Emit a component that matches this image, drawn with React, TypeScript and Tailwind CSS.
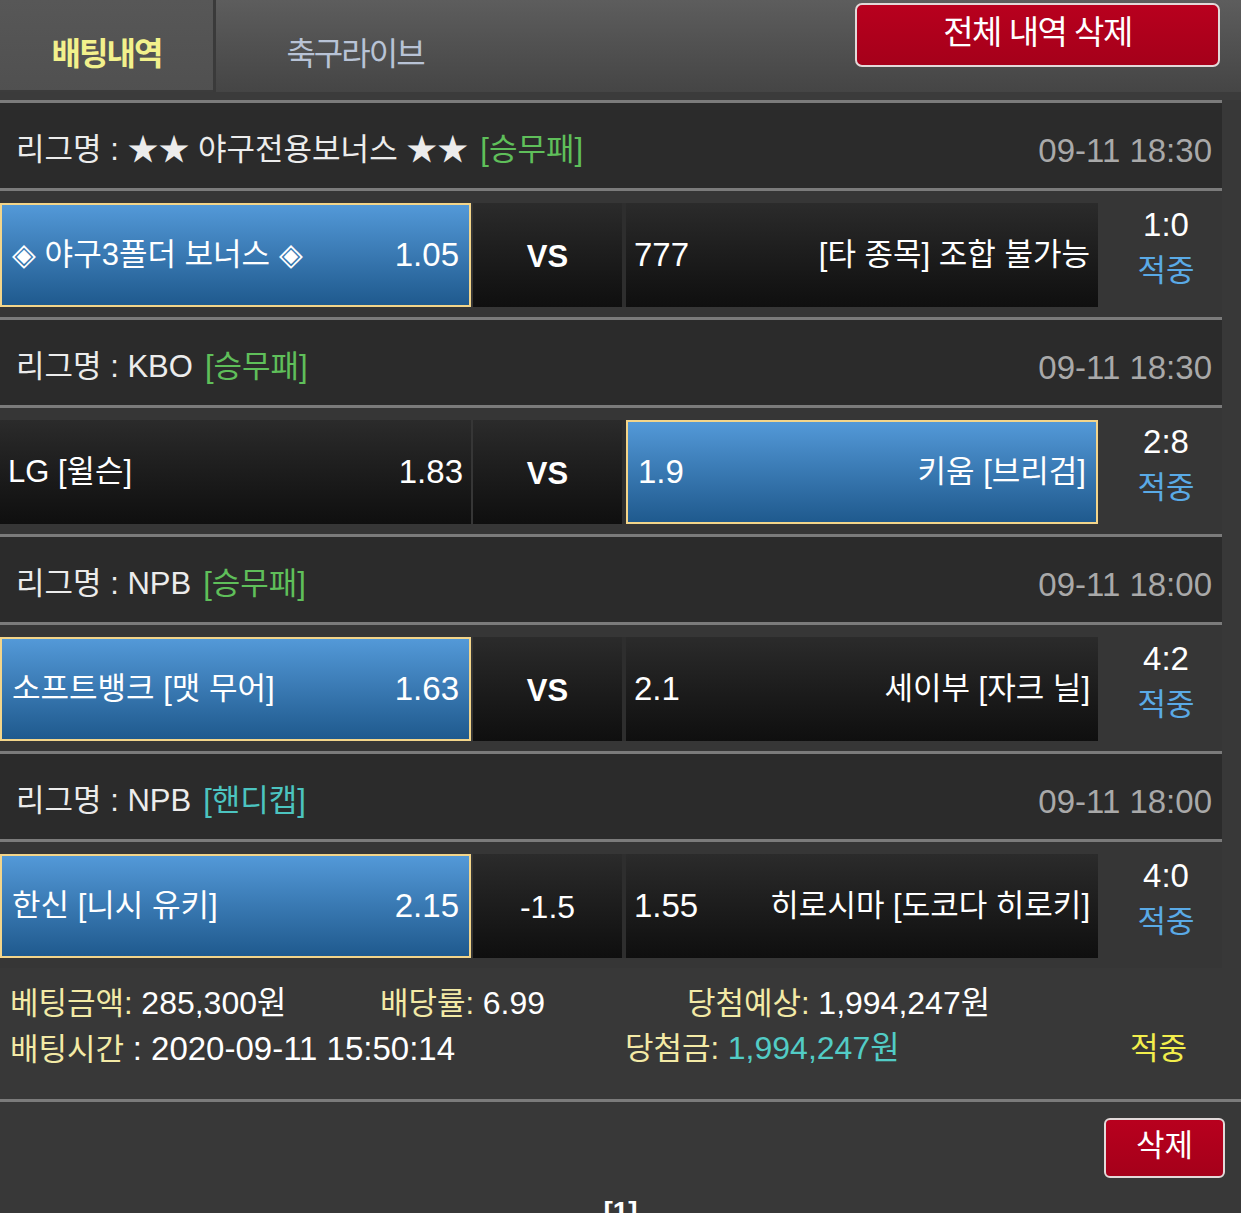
import React from "react";

type Match = {
  league: string;
  type: string;
  typeColor: string;
  time: string;
  home: string;
  homeOdds: string;
  mid: string;
  midBold: boolean;
  awayOdds: string;
  away: string;
  pick: "home" | "away";
  score: string;
};

const matches: Match[] = [
  {
    league: "★★ 야구전용보너스 ★★",
    type: "[승무패]",
    typeColor: "text-[#5fbf5a]",
    time: "09-11 18:30",
    home: "◈ 야구3폴더 보너스 ◈",
    homeOdds: "1.05",
    mid: "VS",
    midBold: true,
    awayOdds: "777",
    away: "[타 종목] 조합 불가능",
    pick: "home",
    score: "1:0",
  },
  {
    league: "KBO",
    type: "[승무패]",
    typeColor: "text-[#5fbf5a]",
    time: "09-11 18:30",
    home: "LG [윌슨]",
    homeOdds: "1.83",
    mid: "VS",
    midBold: true,
    awayOdds: "1.9",
    away: "키움 [브리검]",
    pick: "away",
    score: "2:8",
  },
  {
    league: "NPB",
    type: "[승무패]",
    typeColor: "text-[#5fbf5a]",
    time: "09-11 18:00",
    home: "소프트뱅크 [맷 무어]",
    homeOdds: "1.63",
    mid: "VS",
    midBold: true,
    awayOdds: "2.1",
    away: "세이부 [자크 닐]",
    pick: "home",
    score: "4:2",
  },
  {
    league: "NPB",
    type: "[핸디캡]",
    typeColor: "text-[#4cc4c0]",
    time: "09-11 18:00",
    home: "한신 [니시 유키]",
    homeOdds: "2.15",
    mid: "-1.5",
    midBold: false,
    awayOdds: "1.55",
    away: "히로시마 [도코다 히로키]",
    pick: "home",
    score: "4:0",
  },
];

const cellBase = "h-[104px] flex items-center justify-between text-white";
const picked =
  "bg-gradient-to-b from-[#5399d8] to-[#1f5a8e] border-2 border-[#f3d58a] px-[10px]";
const normal = "bg-gradient-to-b from-[#2b2b2b] to-[#0f0f0f] px-[8px]";

const Line = () => <div className="h-[3px] w-[1222px] bg-[#7b7b7b]" />;

const MatchBlock = ({ m, last }: { m: Match; last: boolean }) => (
  <>
    <div className="h-[85px] w-[1222px] bg-[#2b2b2b] flex items-center justify-between pl-[16px] pr-[10px] pt-[10px]">
      <div className="text-[#ececec] text-[31px]">
        리그명 : {m.league}
        <span className={`ml-[12px] ${m.typeColor}`}>{m.type}</span>
      </div>
      <div className="text-[#a9a9a9] text-[33px]">{m.time}</div>
    </div>
    <Line />
    <div className="h-[126px] w-[1222px] bg-[#363636] flex pt-[12px]">
      <div className={`w-[471px] ${cellBase} ${m.pick === "home" ? picked : normal}`}>
        <span className="text-[31px]">{m.home}</span>
        <span className="text-[33px]">{m.homeOdds}</span>
      </div>
      <div
        className={`ml-[2px] w-[149px] h-[104px] flex items-center justify-center text-white bg-gradient-to-b from-[#2b2b2b] to-[#0f0f0f] ${
          m.midBold ? "font-bold text-[31px] pt-[4px]" : "text-[32px] pt-[2px]"
        }`}
      >
        {m.mid}
      </div>
      <div className="w-[4px] h-[104px] bg-[#2e2e2e]" />
      <div className={`w-[472px] ${cellBase} ${m.pick === "away" ? picked : normal}`}>
        <span className="text-[33px]">{m.awayOdds}</span>
        <span className="text-[31px]">{m.away}</span>
      </div>
      <div className="w-[124px] h-[104px] flex flex-col items-center justify-center leading-[46px] pl-[12px] pb-[14px]">
        <span className="text-white text-[33px]">{m.score}</span>
        <span className="text-[#5aaae6] text-[31px]">적중</span>
      </div>
    </div>
    {!last && <Line />}
  </>
);

export default function App() {
  return (
    <div className="w-[1241px] min-h-[1213px] bg-[#383838] font-['Liberation_Sans','Noto_Sans_CJK_KR',sans-serif] overflow-hidden">
      <div className="h-[92px] bg-gradient-to-b from-[#5d5d5d] to-[#454545] flex items-stretch">
        <div className="w-[216px] bg-gradient-to-b from-[#575757] to-[#505050] border-r-[3px] border-[#3a3a3a] flex items-center justify-center pt-[16px] shadow-[inset_0_-2px_0_#3c3c3c]">
          <span className="text-[#f2f18c] text-[32px] font-bold tracking-[-2px]">배팅내역</span>
        </div>
        <div className="w-[278px] flex items-center justify-center pt-[16px]">
          <span className="text-[#b8c3d6] text-[32px] tracking-[-2px]">축구라이브</span>
        </div>
        <div className="flex-1 flex justify-end items-start pt-[3px] pr-[21px]">
          <button className="w-[365px] h-[64px] rounded-[7px] border-2 border-[#e2d9d9] bg-gradient-to-b from-[#b8001e] to-[#a5001a] text-white text-[33px] flex items-center justify-center pb-[4px] tracking-[-1.5px]">
            전체 내역 삭제
          </button>
        </div>
      </div>
      <div className="h-[8px] bg-[#3b3b3b]" />
      <Line />
      {matches.map((m, i) => (
        <MatchBlock key={i} m={m} last={i === matches.length - 1} />
      ))}
      <div className="h-[131px] pt-[13px] text-[31px] leading-[45px]">
        <div className="flex">
          <div className="w-[380px] pl-[10px]">
            <span className="text-[#f3eaa6]">베팅금액:</span> <span className="text-white text-[32px]">285,300원</span>
          </div>
          <div className="w-[307px]">
            <span className="text-[#f3eaa6]">배당률:</span> <span className="text-white text-[32px]">6.99</span>
          </div>
          <div>
            <span className="text-[#f3eaa6]">당첨예상:</span> <span className="text-white text-[32px]">1,994,247원</span>
          </div>
        </div>
        <div className="flex">
          <div className="w-[625px] pl-[10px]">
            <span className="text-[#f3eaa6]">배팅시간</span> <span className="text-white text-[33px]">: 2020-09-11 15:50:14</span>
          </div>
          <div className="w-[505px]">
            <span className="text-[#f3eaa6]">당첨금:</span> <span className="text-[#52ccc6] text-[32px]">1,994,247원</span>
          </div>
          <div className="text-[#f2ee4c]">적중</div>
        </div>
      </div>
      <div className="h-[3px] bg-[#7b7b7b]" />
      <div className="flex justify-end pt-[16px] pr-[16px]">
        <button className="w-[121px] h-[60px] rounded-[6px] border-2 border-[#e2d9d9] bg-gradient-to-b from-[#b8001e] to-[#a5001a] text-white text-[31px] flex items-center justify-center pb-[3px]">
          삭제
        </button>
      </div>
      <div className="flex justify-center pt-[13px] pb-[20px]">
        <span className="text-white font-bold text-[28px]">[1]</span>
      </div>
    </div>
  );
}
